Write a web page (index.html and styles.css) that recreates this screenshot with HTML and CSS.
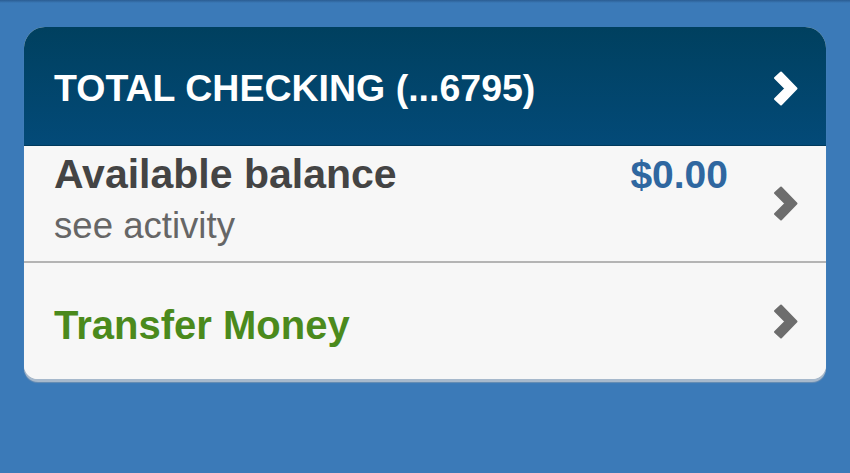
FILE: index.html
```html
<!DOCTYPE html>
<html>
<head>
<meta charset="utf-8">
<link rel="stylesheet" href="styles.css">
</head>
<body>
<div class="topbar"></div>
<div class="page">
  <div class="card">
    <div class="header">
      <span class="title">TOTAL CHECKING (...6795)</span>
      <svg class="chev chev-white" width="25" height="35" viewBox="0 0 25 35"><polygon points="2,7 8,1.5 23.5,17.5 8,33.5 2,28 12.5,17.5" stroke-width="2" stroke-linejoin="round"/></svg>
    </div>
    <div class="row row-balance">
      <div class="col">
        <div class="line1">
          <span class="label">Available balance</span>
          <span class="amount">$0.00</span>
        </div>
        <div class="sub">see activity</div>
      </div>
      <svg class="chev chev-gray" width="25" height="35" viewBox="0 0 25 35"><polygon points="2,7 8,1.5 23.5,17.5 8,33.5 2,28 12.5,17.5" stroke-width="2" stroke-linejoin="round"/></svg>
    </div>
    <div class="row row-transfer">
      <span class="transfer">Transfer Money</span>
      <svg class="chev chev-gray" width="25" height="35" viewBox="0 0 25 35"><polygon points="2,7 8,1.5 23.5,17.5 8,33.5 2,28 12.5,17.5" stroke-width="2" stroke-linejoin="round"/></svg>
    </div>
  </div>
</div>
</body>
</html>
```

FILE: styles.css
```css
html, body {
  margin: 0;
  padding: 0;
}
body {
  background: #3b7ab8;
  width: 850px;
  height: 473px;
  overflow: hidden;
  font-family: "Liberation Sans", Arial, sans-serif;
}
.topbar {
  height: 3px;
  background: linear-gradient(#2b5d92, #3b7ab8);
}
.page {
  padding: 24px 24px 0 24px;
}
.card {
  border-radius: 21px 21px 14px 14px;
  background: #f6f6f6;
  overflow: hidden;
  box-shadow: 0 3px 0 #a7b9cc, 0 4px 1px #6b8fb4;
}
.header {
  height: 118px;
  background: linear-gradient(#00405f, #034a78);
  display: flex;
  align-items: center;
  justify-content: space-between;
  padding: 0 28px 0 30px;
  border-bottom: 1px solid #003a5c;
}
.title {
  color: #ffffff;
  font-weight: bold;
  font-size: 37.5px;
  padding-top: 5px;
}
.row {
  display: flex;
  align-items: center;
  justify-content: space-between;
  padding: 0 28px 0 30px;
  background: #f7f7f7;
}
.row-balance {
  height: 115px;
  border-bottom: 2px solid #b4b4b4;
}
.col {
  flex: 1;
  padding-right: 45px;
  align-self: flex-start;
  padding-top: 5px;
}
.line1 {
  display: flex;
  justify-content: space-between;
  align-items: baseline;
}
.label {
  color: #444444;
  font-weight: bold;
  font-size: 41px;
}
.amount {
  color: #2f67a0;
  font-weight: bold;
  font-size: 39px;
}
.sub {
  color: #666666;
  font-size: 36.6px;
  margin-top: 7px;
}
.row-transfer {
  height: 116px;
}
.transfer {
  color: #4b8a1c;
  font-weight: bold;
  font-size: 40px;
  margin-top: 8px;
}
.chev {
  display: block;
  flex: none;
}
.chev-white {
  fill: #ffffff;
  stroke: #ffffff;
  margin-top: 4px;
}
.chev-gray {
  fill: #6d6d6d;
  stroke: #6d6d6d;
}
```
